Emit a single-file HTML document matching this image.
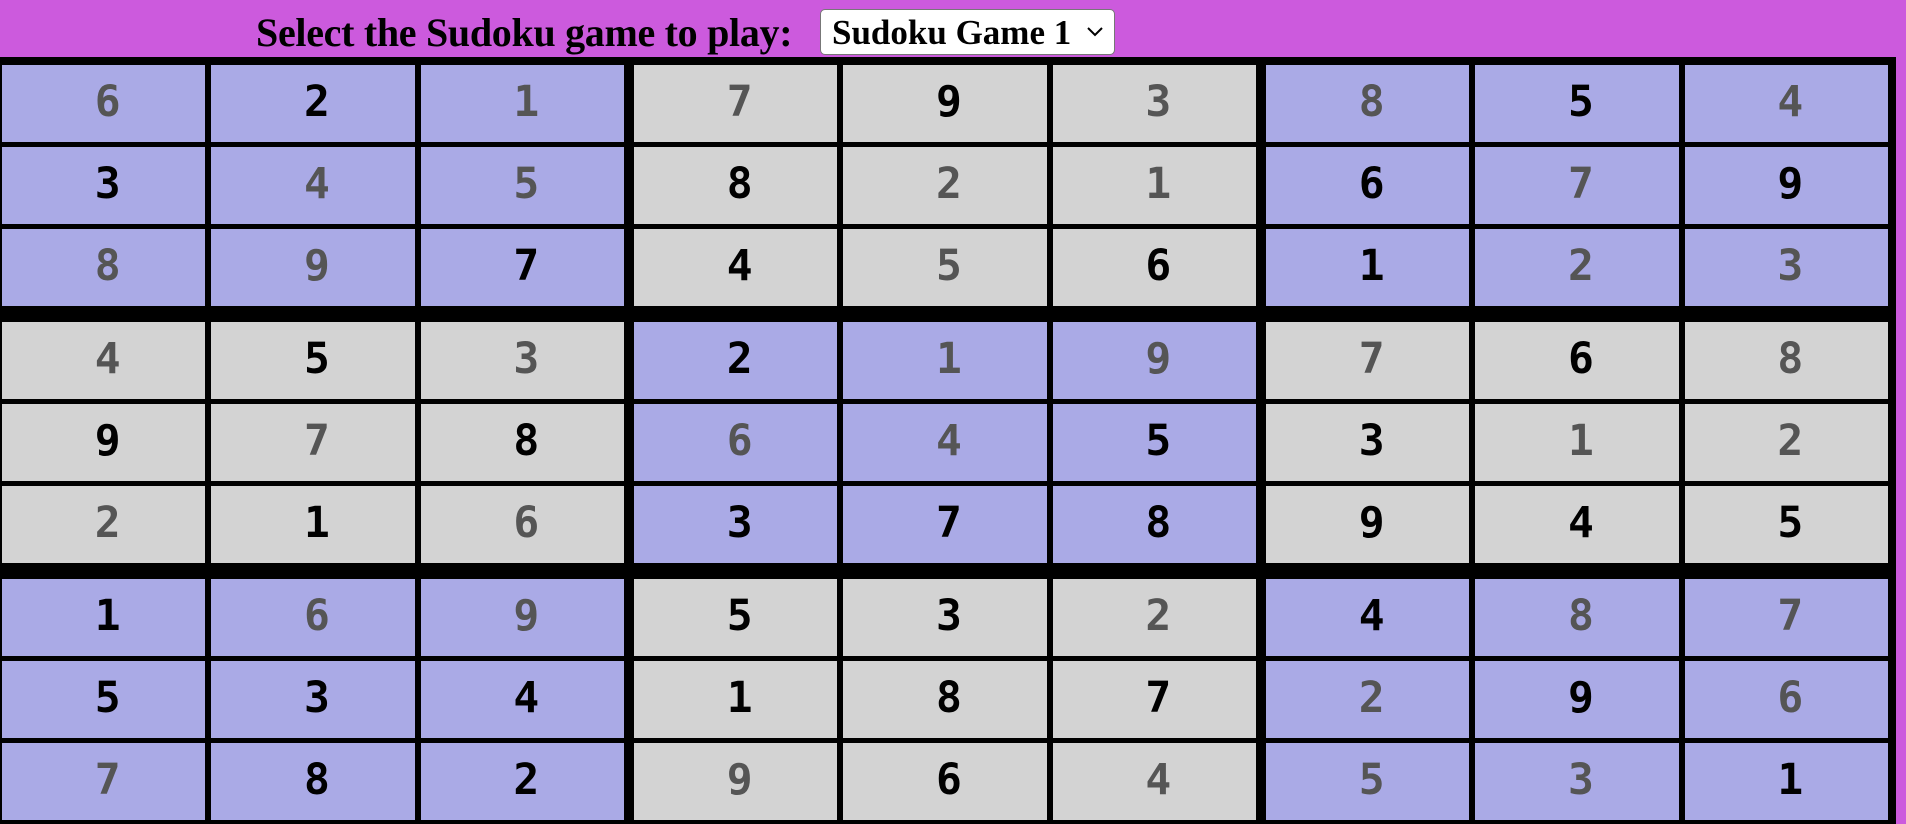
<!DOCTYPE html>
<html><head><meta charset="utf-8"><style>
html,body{margin:0;padding:0;width:1906px;height:824px;overflow:hidden;background:#cc5add;}
.hdr{position:absolute;left:0;top:0;width:1906px;height:57px;}
.lbl{position:absolute;left:256px;top:9px;font:bold 40px "Liberation Serif",serif;color:#000;white-space:nowrap;letter-spacing:-0.3px;}
.sel{position:absolute;left:820px;top:9px;width:295px;height:46px;background:#fff;border:1px solid #777;border-radius:5px;box-sizing:border-box;}
.sel span{position:absolute;left:11px;top:3px;font:bold 35px "Liberation Serif",serif;color:#000;white-space:nowrap;}
.sel svg{position:absolute;left:265px;top:16px;}
.grid{position:absolute;left:0;top:57px;width:1896px;height:767px;overflow:hidden;background:#000;padding:8px 8px 0 2px;box-sizing:border-box;}
.row{display:flex;height:77px;margin-bottom:5px;}
.row.be{margin-bottom:16px;}
.c{flex:1 1 0;margin-right:6px;display:flex;align-items:center;justify-content:center;font:bold 43px "DejaVu Sans Mono",monospace;color:#000;padding:0 0 4px 8px;box-sizing:border-box;}
.c:nth-child(3),.c:nth-child(6){margin-right:10px;}
.c:nth-child(9){margin-right:0;}
.l{background:#aaaae6;}
.d{background:#d3d3d3;}
.g{color:#555;}
</style></head><body>
<div class="hdr">
<div class="lbl">Select the Sudoku game to play:</div>
<div class="sel"><span>Sudoku Game 1</span><svg width="18" height="12" viewBox="0 0 18 12"><path d="M2 2 L9 9 L16 2" fill="none" stroke="#000" stroke-width="2"/></svg></div>
</div>
<div class="grid">
<div class="row"><div class="c l g">6</div><div class="c l">2</div><div class="c l g">1</div><div class="c d g">7</div><div class="c d">9</div><div class="c d g">3</div><div class="c l g">8</div><div class="c l">5</div><div class="c l g">4</div></div>
<div class="row"><div class="c l">3</div><div class="c l g">4</div><div class="c l g">5</div><div class="c d">8</div><div class="c d g">2</div><div class="c d g">1</div><div class="c l">6</div><div class="c l g">7</div><div class="c l">9</div></div>
<div class="row be"><div class="c l g">8</div><div class="c l g">9</div><div class="c l">7</div><div class="c d">4</div><div class="c d g">5</div><div class="c d">6</div><div class="c l">1</div><div class="c l g">2</div><div class="c l g">3</div></div>
<div class="row"><div class="c d g">4</div><div class="c d">5</div><div class="c d g">3</div><div class="c l">2</div><div class="c l g">1</div><div class="c l g">9</div><div class="c d g">7</div><div class="c d">6</div><div class="c d g">8</div></div>
<div class="row"><div class="c d">9</div><div class="c d g">7</div><div class="c d">8</div><div class="c l g">6</div><div class="c l g">4</div><div class="c l">5</div><div class="c d">3</div><div class="c d g">1</div><div class="c d g">2</div></div>
<div class="row be"><div class="c d g">2</div><div class="c d">1</div><div class="c d g">6</div><div class="c l">3</div><div class="c l">7</div><div class="c l">8</div><div class="c d">9</div><div class="c d">4</div><div class="c d">5</div></div>
<div class="row"><div class="c l">1</div><div class="c l g">6</div><div class="c l g">9</div><div class="c d">5</div><div class="c d">3</div><div class="c d g">2</div><div class="c l">4</div><div class="c l g">8</div><div class="c l g">7</div></div>
<div class="row"><div class="c l">5</div><div class="c l">3</div><div class="c l">4</div><div class="c d">1</div><div class="c d">8</div><div class="c d">7</div><div class="c l g">2</div><div class="c l">9</div><div class="c l g">6</div></div>
<div class="row"><div class="c l g">7</div><div class="c l">8</div><div class="c l">2</div><div class="c d g">9</div><div class="c d">6</div><div class="c d g">4</div><div class="c l g">5</div><div class="c l g">3</div><div class="c l">1</div></div>
</div>
</body></html>
